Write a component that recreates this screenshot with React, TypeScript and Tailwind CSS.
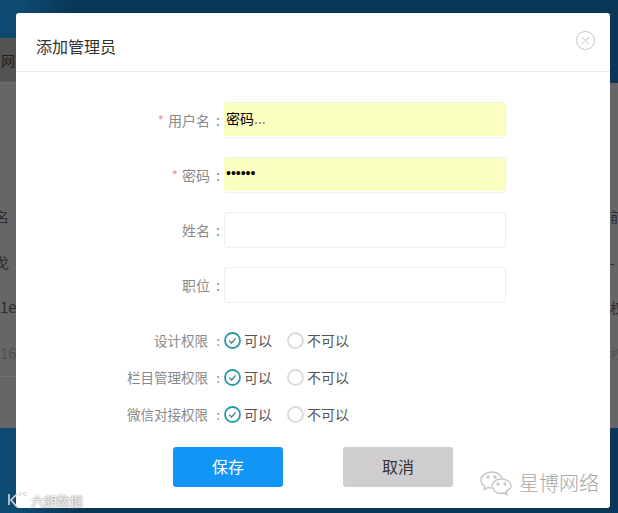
import React from 'react';

const cjk = "font-['Noto_Sans_CJK_SC','Liberation_Sans',sans-serif]";

const TextRow = ({ label, required, filled, children }: { label: string; required?: boolean; filled?: boolean; children?: React.ReactNode }) => (
  <div className="flex items-center h-9">
    <div className="w-[204px] flex justify-end text-sm text-[#8a8a8a]">
      {required && <span className="text-[#d9a0a0] mr-1">*</span>}
      <span>{label}</span>
      <span className="w-[10px] text-right">:</span>
    </div>
    <div className="ml-1 w-[282px] h-9 border border-[#f0eef2] rounded-[3px] bg-white">
      {filled && (
        <div className="h-[33px] bg-[#fbffbf] flex items-center text-sm text-black leading-none -ml-px pl-[2px] pb-1">{children}</div>
      )}
    </div>
  </div>
);

const Radio = ({ checked, label }: { checked?: boolean; label: string }) => (
  <div className="flex items-center gap-[3px] text-sm text-[#555]">
    {checked ? (
      <svg width="17" height="17" viewBox="0 0 17 17" fill="none">
        <circle cx="8.5" cy="8.5" r="7.5" stroke="#2a9aa8" strokeWidth="1.8" />
        <path d="M5.2 8.8 7.6 11l4-4.6" stroke="#3f7f88" strokeWidth="1.3" />
      </svg>
    ) : (
      <span className="w-[17px] h-[17px] rounded-full border-2 border-[#dcdcdc] bg-white" />
    )}
    <span>{label}</span>
  </div>
);

const RadioRow = ({ label }: { label: string }) => (
  <div className="flex items-center h-5">
    <div className="w-[204px] flex justify-end text-[13.5px] text-[#8a8a8a]">
      <span>{label}</span>
      <span className="w-3 text-right">:</span>
    </div>
    <div className="ml-1 flex gap-[15px]">
      <Radio checked label="可以" />
      <Radio label="不可以" />
    </div>
  </div>
);

export default function App() {
  return (
    <div className={`relative w-[618px] h-[513px] overflow-hidden bg-linear-to-r from-[#0d4a72] from-[3%] to-[#0a3658] to-[12%] ${cjk}`}>
      <div className="h-[38px]" />
      {/* page behind the dialog */}
      <div className="h-[45px] w-[400px] bg-[#545354] border-b border-[#6e6c6e] flex items-center text-sm text-[#222] pl-[1px]">网</div>
      <div className="h-[345px] bg-[#676567] text-sm text-[#2c2c2c] flex justify-between">
        <div className="w-4 flex flex-col pt-[124px] gap-[27.5px] leading-[18px]">
          <span className="-ml-[5px]">名</span>
          <span className="-ml-[5px]">戈</span>
          <span className="whitespace-nowrap text-[15px]">1e</span>
          <span className="whitespace-nowrap text-[15px] text-[#4f4f4f]">16</span>
          <div className="border-t border-[#757375] -mt-[13px]" />
        </div>
        <div className="flex flex-col pt-[124px] gap-[27.5px] items-start w-[8px] leading-[18px]">
          <span>前</span>
          <span>-</span>
          <span>权</span>
          <span className="text-[#555]">权</span>
        </div>
      </div>

      {/* dialog */}
      <div className="absolute left-4 top-[13px] w-[594px] h-[495px] bg-white rounded-[3px]">
        <div className="h-[59px] border-b border-[#ececec] flex items-center justify-between pl-5 pr-[15px]">
          <span className="text-base text-[#333] pt-[7px]">添加管理员</span>
          <svg width="19" height="19" viewBox="0 0 19 19" fill="none" stroke="#c4c4c4" className="mt-[-4px]">
            <circle cx="9.5" cy="9.5" r="9" />
            <path d="M6 6l7 7M13 6l-7 7" />
          </svg>
        </div>
        <div className="flex flex-col pt-[30px]">
          <div className="flex flex-col gap-[19px]">
            <TextRow label="用户名" required filled>
              密码<span className="text-[#888]">...</span>
            </TextRow>
            <TextRow label="密码" required filled>
              <span className="font-['Liberation_Sans',sans-serif]">••••••</span>
            </TextRow>
            <TextRow label="姓名" />
            <TextRow label="职位" />
          </div>
          <div className="flex flex-col gap-[17px] mt-[27px]">
            <RadioRow label="设计权限" />
            <RadioRow label="栏目管理权限" />
            <RadioRow label="微信对接权限" />
          </div>
          <div className="flex gap-[60px] pl-[157px] mt-[23px]">
            <button className="w-[110px] h-10 rounded-[3px] bg-[#1296f5] text-white text-base pb-[2px]">保存</button>
            <button className="w-[110px] h-10 rounded-[3px] bg-[#cfcdcf] text-[#333] text-base pb-[2px]">取消</button>
          </div>
        </div>
      </div>

      {/* watermarks */}
      <div className="absolute left-[7px] top-[491px] flex items-center gap-[2px] text-white">
        <svg width="22" height="18" viewBox="0 0 22 18" fill="none" stroke="#d8d8d8" strokeWidth="1.6">
          <path d="M2 3v11M10 3 4 9l6 7" />
          <circle cx="13" cy="3" r="1.6" strokeWidth="1" />
          <circle cx="18" cy="3" r="1.6" strokeWidth="1" />
        </svg>
        <span className="text-[13px] leading-none text-[#eeeeee] drop-shadow-[0_0_1px_#777]">六朗数据</span>
      </div>
      <div className="absolute left-[480px] top-[470px] flex items-center gap-[7px]">
        <svg width="32" height="26" viewBox="0 0 32 26" fill="none" stroke="#c6c6c6" strokeWidth="1.4">
          <path d="M12 2C6 2 1 5.500 1 10c0 3 2 5 4 6.500l-1 3 4-2c1 .4 2 .5 3 .5" />
          <path d="M12 2c5 0 9 3 10 6" />
          <path d="M21 9c-5 0-9 3.200-9 7s4 7.500 9 7.500c1 0 2-.2 3-.5l3 1.500-1-3c3-1.500 5-3.300 5-5.500 0-4-4-7-10-7z" />
          <circle cx="8" cy="7" r="1" fill="#c6c6c6" />
          <circle cx="15" cy="7" r="1" fill="#c6c6c6" />
          <circle cx="18" cy="14" r="1" fill="#c6c6c6" />
          <circle cx="25" cy="14" r="1" fill="#c6c6c6" />
        </svg>
        <span className="text-xl leading-none font-light text-[#a8a8a8]">星博网络</span>
      </div>
    </div>
  );
}
